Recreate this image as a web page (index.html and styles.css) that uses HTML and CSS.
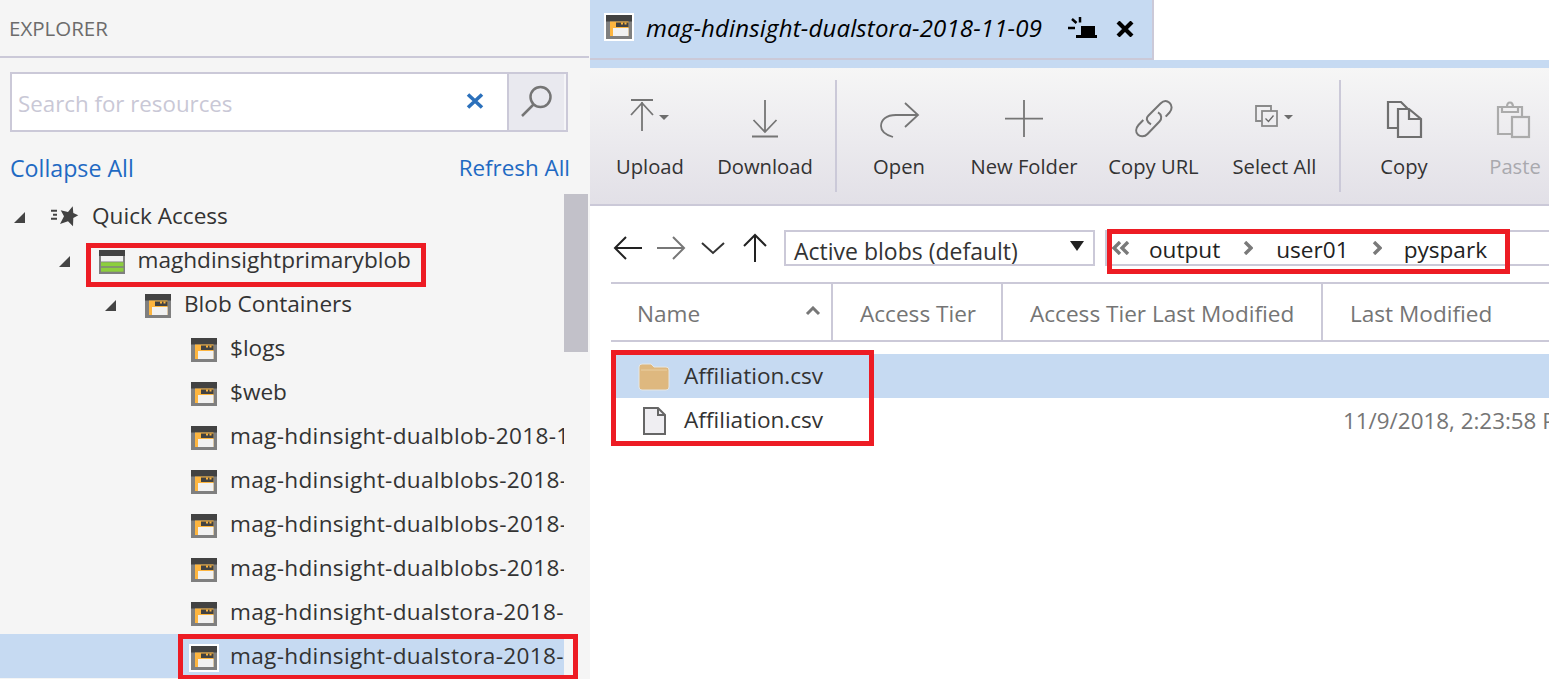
FILE: index.html
```html
<!DOCTYPE html>
<html lang="en">
<head>
<meta charset="utf-8">
<title>Storage Explorer</title>
<link rel="stylesheet" href="styles.css">
</head>
<body>
<svg class="defs" width="0" height="0" aria-hidden="true">
  <defs>
    <symbol id="container" viewBox="0 0 26 24">
      <rect width="26" height="24" fill="#7f7f7f"/>
      <rect width="26" height="6.500" fill="#424242"/>
      <rect x="4" y="6.500" width="18.500" height="14.500" fill="#fdb53f"/>
      <rect x="7" y="13" width="15.500" height="8" fill="#f1f1f1"/>
      <rect x="10" y="7.500" width="12.500" height="4.500" fill="#424242"/>
      <rect x="15" y="7.500" width="2" height="2" fill="#fdb53f"/>
      <rect x="18.500" y="7.500" width="2" height="2" fill="#fdb53f"/>
    </symbol>
    <symbol id="tri" viewBox="0 0 11 11"><path d="M11 0V11H0Z" fill="#444"/></symbol>
    <symbol id="caret" viewBox="0 0 10 5"><path d="M0 0H10L5 5Z" fill="#6d6d6d"/></symbol>
  </defs>
</svg>
<div class="app">
  <aside class="sidebar">
    <header class="side-head">EXPLORER</header>
    <div class="search">
      <span class="search-field">
        <span class="placeholder">Search for resources</span>
        <svg class="clear" viewBox="0 0 18 16"><path d="M2 1.500L16 14.500M16 1.500L2 14.500" stroke="#2b70bb" stroke-width="3.600" fill="none"/></svg>
      </span>
      <span class="search-btn">
        <svg width="34" height="34" viewBox="0 0 34 34"><circle cx="20.500" cy="13" r="10" fill="none" stroke="#757575" stroke-width="2.500"/><path d="M13.500 20.500L2 32" stroke="#757575" stroke-width="2.500"/></svg>
      </span>
    </div>
    <div class="links"><a class="collapse">Collapse All</a><a class="refresh">Refresh All</a></div>
    <div class="tree-wrap">
      <ul class="tree">
        <li class="row l0"><svg class="tri"><use href="#tri"/></svg>
          <svg class="ico qa" viewBox="0 0 28 22"><path d="M0 5.700H6M2 9.700H6M0 13.700H6" stroke="#444" stroke-width="2"/><path d="M21.700 1.300L22.300 8 27.300 10.300 22.300 13 22 21.300 17 16.300 9 19 13 11.300 9.700 5.300 17 7Z" fill="#424242"/></svg>
          <span class="label">Quick Access</span></li>
        <li class="row l1"><svg class="tri"><use href="#tri"/></svg>
          <svg class="ico st" viewBox="0 0 26 24"><rect width="26" height="24" fill="#7f7f7f"/><rect width="26" height="6" fill="#424242"/><rect x="2" y="6" width="22" height="5.500" fill="#f1f1f1"/><rect x="2" y="12.300" width="22.500" height="4" fill="#8ccf3c"/><rect x="2" y="17.700" width="22.500" height="4" fill="#8ccf3c"/></svg>
          <span class="label">maghdinsightprimaryblob</span></li>
        <li class="row l2"><svg class="tri"><use href="#tri"/></svg>
          <svg class="ico"><use href="#container"/></svg>
          <span class="label">Blob Containers</span></li>
        <li class="row l3"><span class="tri"></span><svg class="ico"><use href="#container"/></svg><span class="label">$logs</span></li>
        <li class="row l3"><span class="tri"></span><svg class="ico"><use href="#container"/></svg><span class="label">$web</span></li>
        <li class="row l3"><span class="tri"></span><svg class="ico"><use href="#container"/></svg><span class="label long">mag-hdinsight-dualblob-2018-11-09</span></li>
        <li class="row l3"><span class="tri"></span><svg class="ico"><use href="#container"/></svg><span class="label long">mag-hdinsight-dualblobs-2018-11-09</span></li>
        <li class="row l3"><span class="tri"></span><svg class="ico"><use href="#container"/></svg><span class="label long">mag-hdinsight-dualblobs-2018-11-09</span></li>
        <li class="row l3"><span class="tri"></span><svg class="ico"><use href="#container"/></svg><span class="label long">mag-hdinsight-dualblobs-2018-11-09</span></li>
        <li class="row l3"><span class="tri"></span><svg class="ico"><use href="#container"/></svg><span class="label long">mag-hdinsight-dualstora-2018-11-09</span></li>
        <li class="row l3 selected"><span class="tri"></span><svg class="ico framed"><use href="#container"/></svg><span class="label long">mag-hdinsight-dualstora-2018-11-09</span></li>
      </ul>
      <div class="scroll-track"><div class="scroll-thumb"></div></div>
    </div>
  </aside>

  <main class="main">
    <div class="tabs">
      <div class="tab">
        <svg class="tab-ico"><use href="#container"/></svg>
        <span class="tab-title">mag-hdinsight-dualstora-2018-11-09</span>
        <svg class="pin" viewBox="0 0 30 22"><rect x="13" y="9" width="14" height="9" fill="#000"/><rect x="8" y="18" width="21" height="3" fill="#000"/><path d="M0 11H7M4 2L8.500 6M12 0V5.500" stroke="#000" stroke-width="2.500" fill="none"/></svg>
        <svg class="close" viewBox="0 0 18 16"><path d="M2 1L16 15M16 1L2 15" stroke="#000" stroke-width="4.200"/></svg>
      </div>
    </div>
    <div class="tab-strip"></div>

    <div class="toolbar">
      <button class="tb w-upload">
        <svg class="tb-ico" viewBox="0 0 46 40"><path d="M4 1H26M15 3V32M4 16L15 4 26 16" stroke="#757575" stroke-width="1.800" fill="none"/><use href="#caret" x="32" y="16" width="10" height="5"/></svg>
        <span>Upload</span></button>
      <button class="tb w-download">
        <svg class="tb-ico" viewBox="0 0 46 40"><path d="M23 1V33M11.500 21L23 33 34.500 21M10 37.500H36" stroke="#757575" stroke-width="1.800" fill="none"/></svg>
        <span>Download</span></button>
      <i class="sep"></i>
      <button class="tb w-open">
        <svg class="tb-ico" viewBox="0 0 46 40"><path d="M29 4L42 16 29 28M42 16H20C10 16 5 21 5 27S10 36 17 38" stroke="#757575" stroke-width="1.800" fill="none"/></svg>
        <span>Open</span></button>
      <button class="tb w-folder">
        <svg class="tb-ico" viewBox="0 0 46 40"><path d="M23 1V38M4 19.700H42" stroke="#757575" stroke-width="1.800" fill="none"/></svg>
        <span>New Folder</span></button>
      <button class="tb w-url">
        <svg class="tb-ico" viewBox="0 0 46 40"><g fill="none" stroke="#757575" stroke-width="2"><path d="M34.700 17.700L38.500 13.500C41.500 10 41 6 38.500 3.800C36 1.500 32.500 1.500 29.500 4.500L17.500 16.500C15 19 15 22.500 20 25.300"/><path d="M12.300 21L7.500 26C4.500 29.500 4.500 33.500 7 35.800C9.500 38 13.500 38 16.500 35L28.500 22.500C31 20 31 15.500 27 13.300"/></g></svg>
        <span>Copy URL</span></button>
      <button class="tb w-all">
        <svg class="tb-ico" viewBox="0 0 46 40"><g fill="none" stroke="#8a8a8a" stroke-width="1.800"><path d="M10 22H4V7H19V12"/><rect x="10" y="12" width="15" height="15"/><path d="M13.500 19.500l3 3 5-6" stroke="#666" stroke-width="1.300"/></g><use href="#caret" x="32" y="16" width="9" height="4.500"/></svg>
        <span>Select All</span></button>
      <i class="sep"></i>
      <button class="tb w-copy">
        <svg class="tb-ico" viewBox="0 0 46 40"><g fill="none" stroke="#6f6f6f" stroke-width="2.200"><path d="M17 29H7V3H20L27 10"/><path d="M17 10H28L40 20V38H17ZM28 10V20H40"/></g></svg>
        <span>Copy</span></button>
      <button class="tb w-paste disabled">
        <svg class="tb-ico" viewBox="0 0 46 40"><g fill="none" stroke="#ababab" stroke-width="2.200"><path d="M20 35H6V8H30V18"/><path d="M10 8V13H26V8H21C21 2 15 2 15 8Z"/><rect x="20" y="18" width="17" height="20"/></g></svg>
        <span>Paste</span></button>
    </div>

    <div class="content">
      <div class="nav">
        <svg class="nav-ico back" viewBox="0 0 30 24"><path d="M29 12H2M13 1L2 12 13 23" stroke="#222" stroke-width="2" fill="none"/></svg>
        <svg class="nav-ico fwd" viewBox="0 0 30 24"><path d="M1 12H28M17 1L28 12 17 23" stroke="#777" stroke-width="2" fill="none"/></svg>
        <svg class="nav-ico down" viewBox="0 0 24 24"><path d="M1 7L12 17 23 7" stroke="#333" stroke-width="2" fill="none"/></svg>
        <svg class="nav-ico up" viewBox="0 0 24 30"><path d="M12 29V2M1 13L12 2 23 13" stroke="#222" stroke-width="2" fill="none"/></svg>
        <div class="select"><span>Active blobs (default)</span><svg class="sel-caret" viewBox="0 0 14 10"><path d="M0 0H14L7 10Z" fill="#222"/></svg></div>
        <div class="crumbs">
          <svg class="dbl" viewBox="0 0 20 14"><path d="M9 1L3 7 9 13M17 1L11 7 17 13" stroke="#7a7a7a" stroke-width="3.400" fill="none"/></svg>
          <span>output</span>
          <svg class="chev" viewBox="0 0 10 14"><path d="M2 1L8 7 2 13" stroke="#7a7a7a" stroke-width="3.400" fill="none"/></svg>
          <span>user01</span>
          <svg class="chev" viewBox="0 0 10 14"><path d="M2 1L8 7 2 13" stroke="#7a7a7a" stroke-width="3.400" fill="none"/></svg>
          <span>pyspark</span>
        </div>
      </div>
      <div class="cols">
        <div class="col c-name">Name<svg class="sort" viewBox="0 0 16 10"><path d="M2 8L8 2 14 8" stroke="#777" stroke-width="3" fill="none"/></svg></div>
        <div class="col c-tier">Access Tier</div>
        <div class="col c-tierm">Access Tier Last Modified</div>
        <div class="col c-mod">Last Modified</div>
      </div>
      <div class="file sel">
        <svg class="f-ico" viewBox="0 0 32 28"><path d="M1 4Q1 1 4 1H13L16 4H28Q31 4 31 7V24Q31 27 28 27H4Q1 27 1 24Z" fill="#deb87f" stroke="#e3e6e6" stroke-width="1"/><path d="M3 7H29" stroke="#e9cfa3" stroke-width="1"/></svg>
        <span class="f-name">Affiliation.csv</span>
      </div>
      <div class="file">
        <svg class="f-ico" viewBox="0 0 32 28"><path d="M6 1H20L27 8V27H6Z" fill="#efeef2" stroke="#666" stroke-width="2"/><path d="M20 1V8H27" fill="none" stroke="#666" stroke-width="2"/></svg>
        <span class="f-name">Affiliation.csv</span>
        <span class="f-date">11/9/2018, 2:23:58 PM</span>
      </div>
    </div>
  </main>
</div>
<div class="mark m1"></div>
<div class="mark m2"></div>
<div class="mark m3"></div>
<div class="mark m4"></div>
</body>
</html>
```

FILE: styles.css
```css
* { box-sizing: border-box; }
html, body { margin: 0; height: 100%; overflow: hidden; background: #fff; }
body { font-family: "Open Sans", "Noto Sans", sans-serif; font-size: 22.600px; color: #333; position: relative; }
.defs { position: absolute; }
ul { list-style: none; margin: 0; padding: 0; }
.app { display: flex; height: 679px; width: 1549px; overflow: hidden; }

.sidebar { width: 590px; flex: none; background: #f5f5f5; display: flex; flex-direction: column; padding-right: 1px; }
.side-head { height: 58px; padding: 14px 0 0 9px; font-size: 20.500px; line-height: 28px; color: #6c6c6c; border-bottom: 2px solid #cbc9d8; }
.search { margin: 14px 21px 0 10px; height: 60px; display: flex; border: 2px solid #cbc9d8; background: #fff; }
.search-field { flex: 1; display: flex; align-items: center; justify-content: space-between; padding: 2px 23px 0 6px; }
.placeholder { color: #c9c8d6; font-size: 22.300px; }
.clear { width: 18px; height: 16px; margin-top: -5px; }
.search-btn { width: 59px; background: #e9e9ef; border-left: 2px solid #cbc9d8; border-right: 2px solid #f5f5f8; display: flex; align-items: center; justify-content: center; padding-bottom: 2px; }
.links { display: flex; justify-content: space-between; margin: 20px 19px 0 10px; line-height: 32px; color: #1f6ac3; }
.collapse { font-size: 23.200px; }
.refresh { font-size: 22.400px; }
.tree-wrap { display: flex; margin-top: 10px; flex: 1; min-height: 0; }
.tree { width: 564px; flex: none; }
.row { height: 44px; display: flex; align-items: center; overflow: hidden; white-space: nowrap; }
.l0 { padding-left: 14px; }
.l1 { padding-left: 59px; }
.l2 { padding-left: 105px; }
.l3 { padding-left: 151px; }
.tri { width: 11px; height: 11px; flex: none; margin-right: 29px; }
.row .tri { margin-top: 2px; }
.ico { width: 26px; height: 24px; flex: none; margin: 4px 13px 0 0; }
.ico.qa { margin: 0 13px 0 -3px; width: 28px; height: 22px; }
.ico.st { margin: 3px 12.500px 0 0; }
.ico.framed { outline: 2px solid #fff; }
.label { flex: none; color: #333; margin-top: -2px; }
.long { letter-spacing: 0.320px; }
.selected { background: #c6daf2; }
.scroll-track { width: 24px; flex: none; }
.scroll-thumb { height: 158px; background: #c2c1c9; }

.main { flex: 1; min-width: 0; display: flex; flex-direction: column; }
.tabs { height: 60px; flex: none; }
.tab { width: 564px; height: 60px; background: #c6daf2; border-right: 2px solid #cbc9d8; border-bottom: 2px solid #cbc9d8; display: flex; align-items: center; padding: 0 0 3px 16px; }
.tab-ico { width: 26px; height: 24px; outline: 2px solid #fff; flex: none; margin: -2px 14px 0 0; }
.tab-title { font-style: italic; color: #000; flex: none; width: 422px; white-space: nowrap; font-size: 24px; letter-spacing: 0.160px; }
.pin { width: 30px; height: 22px; flex: none; margin-right: 18px; }
.close { width: 18px; height: 16px; flex: none; margin-top: 2px; }
.tab-strip { height: 8px; flex: none; background: #c6daf2; }

.toolbar { height: 138px; flex: none; display: flex; padding-left: 10px; overflow: hidden; background: linear-gradient(#f6f6f6, #e2e0e7); border-bottom: 2px solid #cbc9d8; }
.tb { flex: none; border: 0; background: none; padding: 0; font: inherit; font-size: 20.200px; color: #333; display: flex; flex-direction: column; align-items: center; }
.tb-ico { width: 46px; height: 40px; margin-top: 31px; }
.tb span { margin-top: 11px; line-height: 32px; white-space: nowrap; }
.disabled span { color: #a9a9ae; }
.w-upload { width: 100px; }
.w-download { width: 130px; }
.w-open { width: 114px; }
.w-folder { width: 136px; }
.w-url { width: 123px; }
.w-all { width: 119px; }
.w-copy { width: 116px; }
.w-paste { width: 106px; }
.sep { width: 2px; height: 112px; margin: 12px 5px 0; background: #cbc9d8; flex: none; }

.content { flex: 1; min-height: 0; padding-left: 21px; overflow: hidden; }
.nav { display: flex; align-items: center; height: 36px; margin-top: 24px; }
.nav-ico { flex: none; }
.back { width: 30px; height: 24px; margin: 0 13px 0 2px; }
.fwd { width: 30px; height: 24px; margin-right: 15px; }
.down { width: 24px; height: 24px; margin-right: 18px; }
.up { width: 24px; height: 30px; margin-right: 17px; }
.select { width: 311px; height: 36px; flex: none; border: 2px solid #cbc9d8; display: flex; align-items: center; justify-content: space-between; padding: 6px 8px 0 8px; color: #333; font-size: 23px; }
.sel-caret { width: 16px; height: 10px; margin-top: -10px; }
.crumbs { flex: 1; min-width: 0; margin-left: 10px; height: 36px; border: 2px solid #cbc9d8; border-right: 0; display: flex; align-items: center; white-space: nowrap; padding: 2px 0 0 4px; color: #222; }
.dbl { width: 20px; height: 14px; margin: -2px 18px 0 0; flex: none; }
.chev { width: 10px; height: 14px; margin: -2px 23px 0 23px; flex: none; }
.chev + span + .chev { margin-right: 22px; }

.cols { display: flex; height: 60px; margin-top: 16px; border-top: 2px solid #cbc9d8; border-bottom: 2px solid #cbc9d8; color: #757575; }
.col { display: flex; align-items: center; border-right: 2px solid #cbc9d8; padding: 2px 0 0 27px; flex: none; white-space: nowrap; }
.c-name { width: 222px; justify-content: space-between; padding: 2px 10px 0 26px; }
.c-tier { width: 170px; }
.c-tierm { width: 320px; }
.c-mod { flex: 1; border-right: 0; }
.sort { width: 16px; height: 10px; margin-top: -4px; }

.file { display: flex; align-items: center; height: 44px; position: relative; white-space: nowrap; padding-left: 27px; }
.file.sel { background: #c6daf2; margin-top: 12px; }
.f-ico { width: 32px; height: 28px; flex: none; margin: 2px 14px 0 0; }
.f-name { color: #333; flex: none; width: 659px; margin-top: -2px; }
.f-date { color: #757575; flex: none; font-size: 22.400px; }

.mark { position: absolute; border: 5px solid #ed1c24; pointer-events: none; }
.m1 { left: 86px; top: 243px; width: 340px; height: 44px; }
.m2 { left: 178px; top: 634px; width: 400px; height: 46px; }
.m3 { left: 611px; top: 350px; width: 263px; height: 96px; }
.m4 { left: 1107px; top: 229px; width: 403px; height: 45px; }
```
